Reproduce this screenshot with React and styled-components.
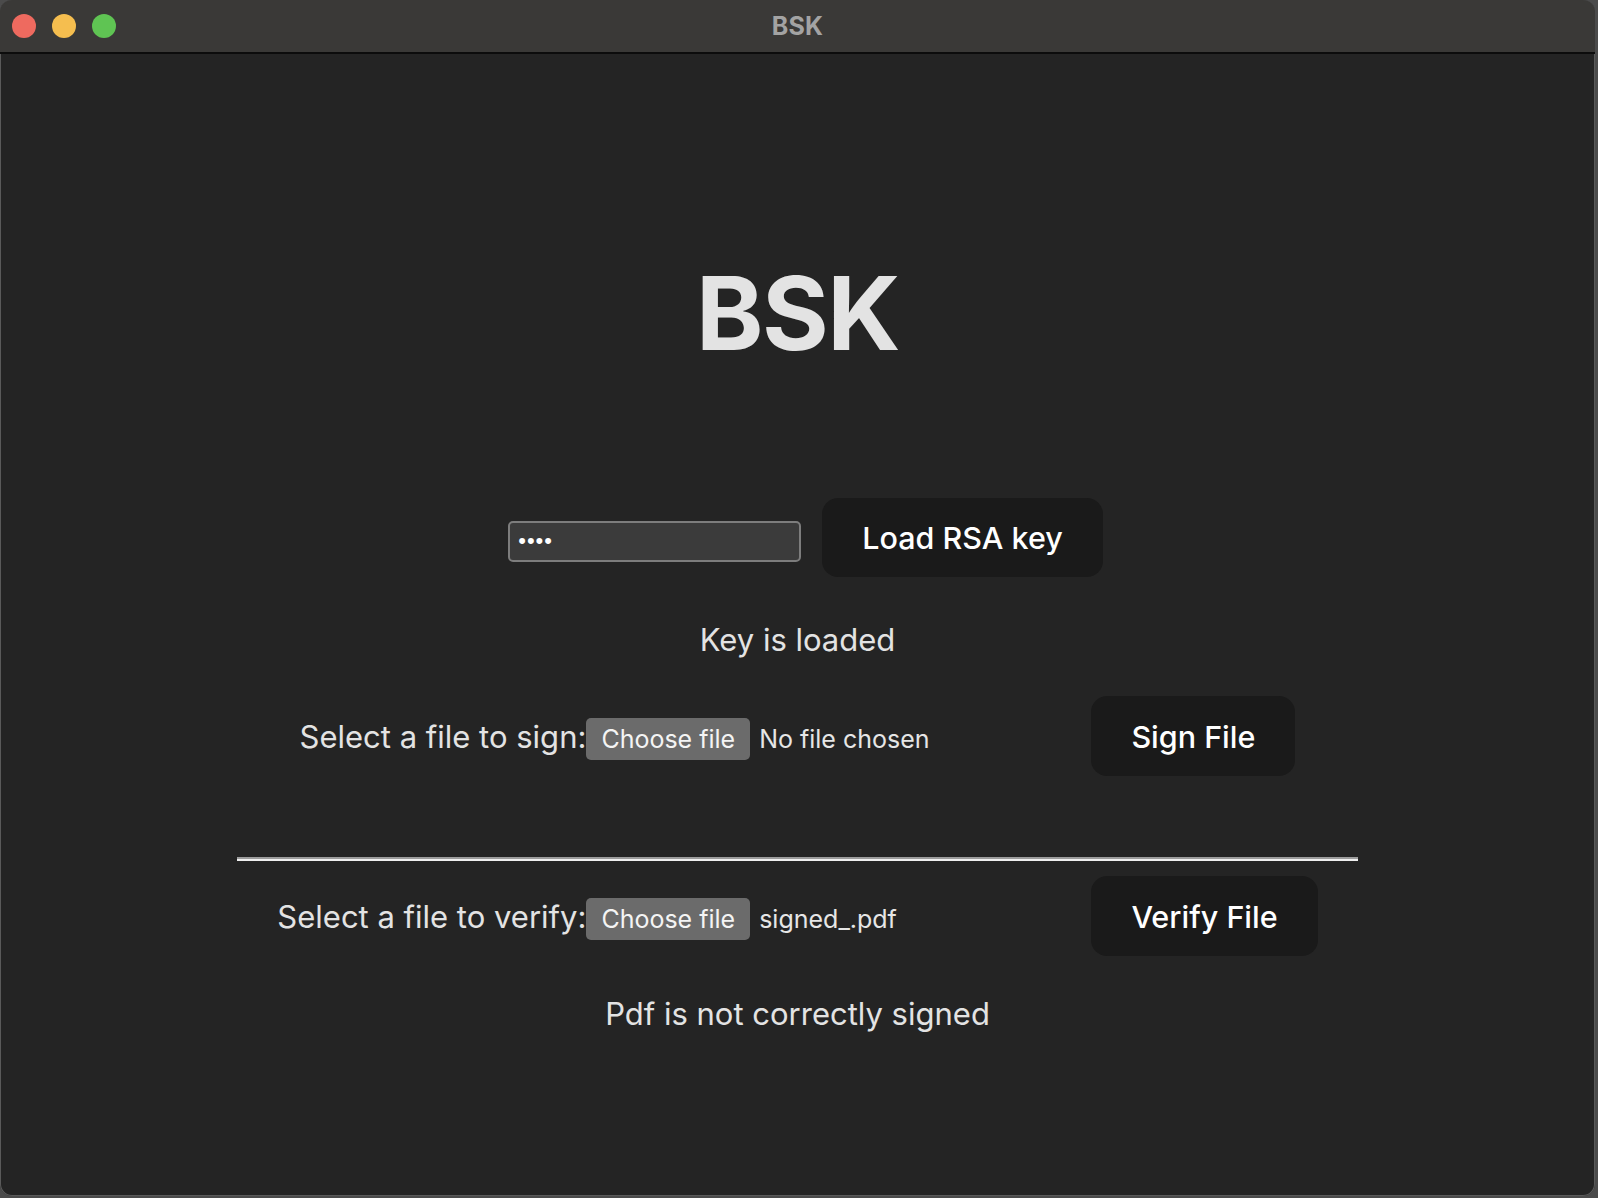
import React from "react";
import styled, { createGlobalStyle } from "styled-components";

const Global = createGlobalStyle`
  html, body { margin: 0; padding: 0; }
  body {
    background: #4b4b4b;
    font-family: Inter, "Noto Sans", "Liberation Sans", sans-serif;
    -webkit-font-smoothing: antialiased;
  }
`;

const Window = styled.div`
  width: 1595px;
  height: 1196px;
  display: flex;
  flex-direction: column;
  border-radius: 12px;
  overflow: hidden;
  background: #242424;
  box-shadow: inset 0 0 0 1px #5a5a5a;
`;

const TitleBar = styled.header`
  position: relative;
  height: 52px;
  flex: 0 0 52px;
  background: #3a3937;
  border-bottom: 2px solid #0c0c0c;
  display: flex;
  align-items: center;
  justify-content: center;
`;

const Lights = styled.div`
  position: absolute;
  left: 12px;
  top: 14px;
  display: flex;
  gap: 16px;
`;

const Light = styled.span`
  width: 24px;
  height: 24px;
  border-radius: 50%;
  background: ${(p) => p.$c};
`;

const WindowTitle = styled.h2`
  margin: 0;
  font-size: 25px;
  font-weight: 700;
  color: #a3a3a3;
  letter-spacing: 0.2px;
`;

const Main = styled.main`
  flex: 1;
  display: flex;
  flex-direction: column;
  align-items: center;
  padding-top: 203px;
  color: #e3e3e3;
`;

const Heading = styled.h1`
  margin: 0;
  font-size: 102px;
  line-height: 112px;
  font-weight: 700;
  color: #e3e3e3;
  letter-spacing: -1.5px;
`;

const KeyRow = styled.form`
  margin-top: 129px;
  display: flex;
  align-items: center;
  gap: 21px;
  padding-left: 16px;
`;

const Password = styled.input`
  box-sizing: border-box;
  width: 293px;
  height: 41px;
  margin-top: 7px;
  background: #3b3b3b;
  border: 2px solid #7d7d7d;
  border-radius: 5px;
  color: #fff;
  font-size: 22px;
  padding: 0 8px;
  letter-spacing: 1px;
  outline: none;
`;

const ActionButton = styled.button`
  box-sizing: border-box;
  height: ${(p) => p.$h || 79}px;
  padding: 0 40px;
  background: #1a1a1a;
  border: none;
  border-radius: 16px;
  color: #ffffff;
  font-family: inherit;
  font-size: 30.5px;
  font-weight: 500;
  cursor: pointer;
  white-space: nowrap;
`;

const Status = styled.p`
  margin: ${(p) => p.$mt}px 0 0;
  font-size: 31px;
  line-height: 48px;
  color: #e3e3e3;
`;

const FileRow = styled.div`
  margin-top: ${(p) => p.$mt}px;
  display: flex;
  align-items: center;
`;

const Label = styled.span`
  font-size: 31px;
  color: #e3e3e3;
  white-space: nowrap;
`;

const Picker = styled.div`
  width: 505px;
  padding-top: 6px;
  display: flex;
  align-items: center;
  gap: 9px;
`;

const ChooseButton = styled.span`
  box-sizing: border-box;
  height: 42px;
  padding: 0 15px;
  display: flex;
  align-items: center;
  background: #6b6b6b;
  border-radius: 5px;
  color: #f4f4f4;
  font-size: 25px;
`;

const FileName = styled.span`
  font-size: 25px;
  color: #e6e6e6;
`;

const Divider = styled.hr`
  box-sizing: border-box;
  width: 1121px;
  margin: 81px 0 0;
  height: 4px;
  border: none;
  border-top: 2px solid #9c9c9c;
  border-bottom: 2px solid #efefef;
`;

export default function App() {
  return (
    <>
      <Global />
      <Window>
        <TitleBar>
          <Lights>
            <Light $c="#ee6a5f" />
            <Light $c="#f5be4f" />
            <Light $c="#5fc453" />
          </Lights>
          <WindowTitle>BSK</WindowTitle>
        </TitleBar>
        <Main>
          <Heading>BSK</Heading>
          <KeyRow onSubmit={(e) => e.preventDefault()}>
            <Password type="password" defaultValue="abcd" />
            <ActionButton type="submit">Load RSA key</ActionButton>
          </KeyRow>
          <Status $mt={39}>Key is loaded</Status>
          <FileRow $mt={32}>
            <Label>Select a file to sign:</Label>
            <Picker>
              <ChooseButton>Choose file</ChooseButton>
              <FileName>No file chosen</FileName>
            </Picker>
            <ActionButton $h={80}>Sign File</ActionButton>
          </FileRow>
          <Divider />
          <FileRow $mt={15}>
            <Label>Select a file to verify:</Label>
            <Picker>
              <ChooseButton>Choose file</ChooseButton>
              <FileName>signed_.pdf</FileName>
            </Picker>
            <ActionButton $h={80}>Verify File</ActionButton>
          </FileRow>
          <Status $mt={34}>Pdf is not correctly signed</Status>
        </Main>
      </Window>
    </>
  );
}
